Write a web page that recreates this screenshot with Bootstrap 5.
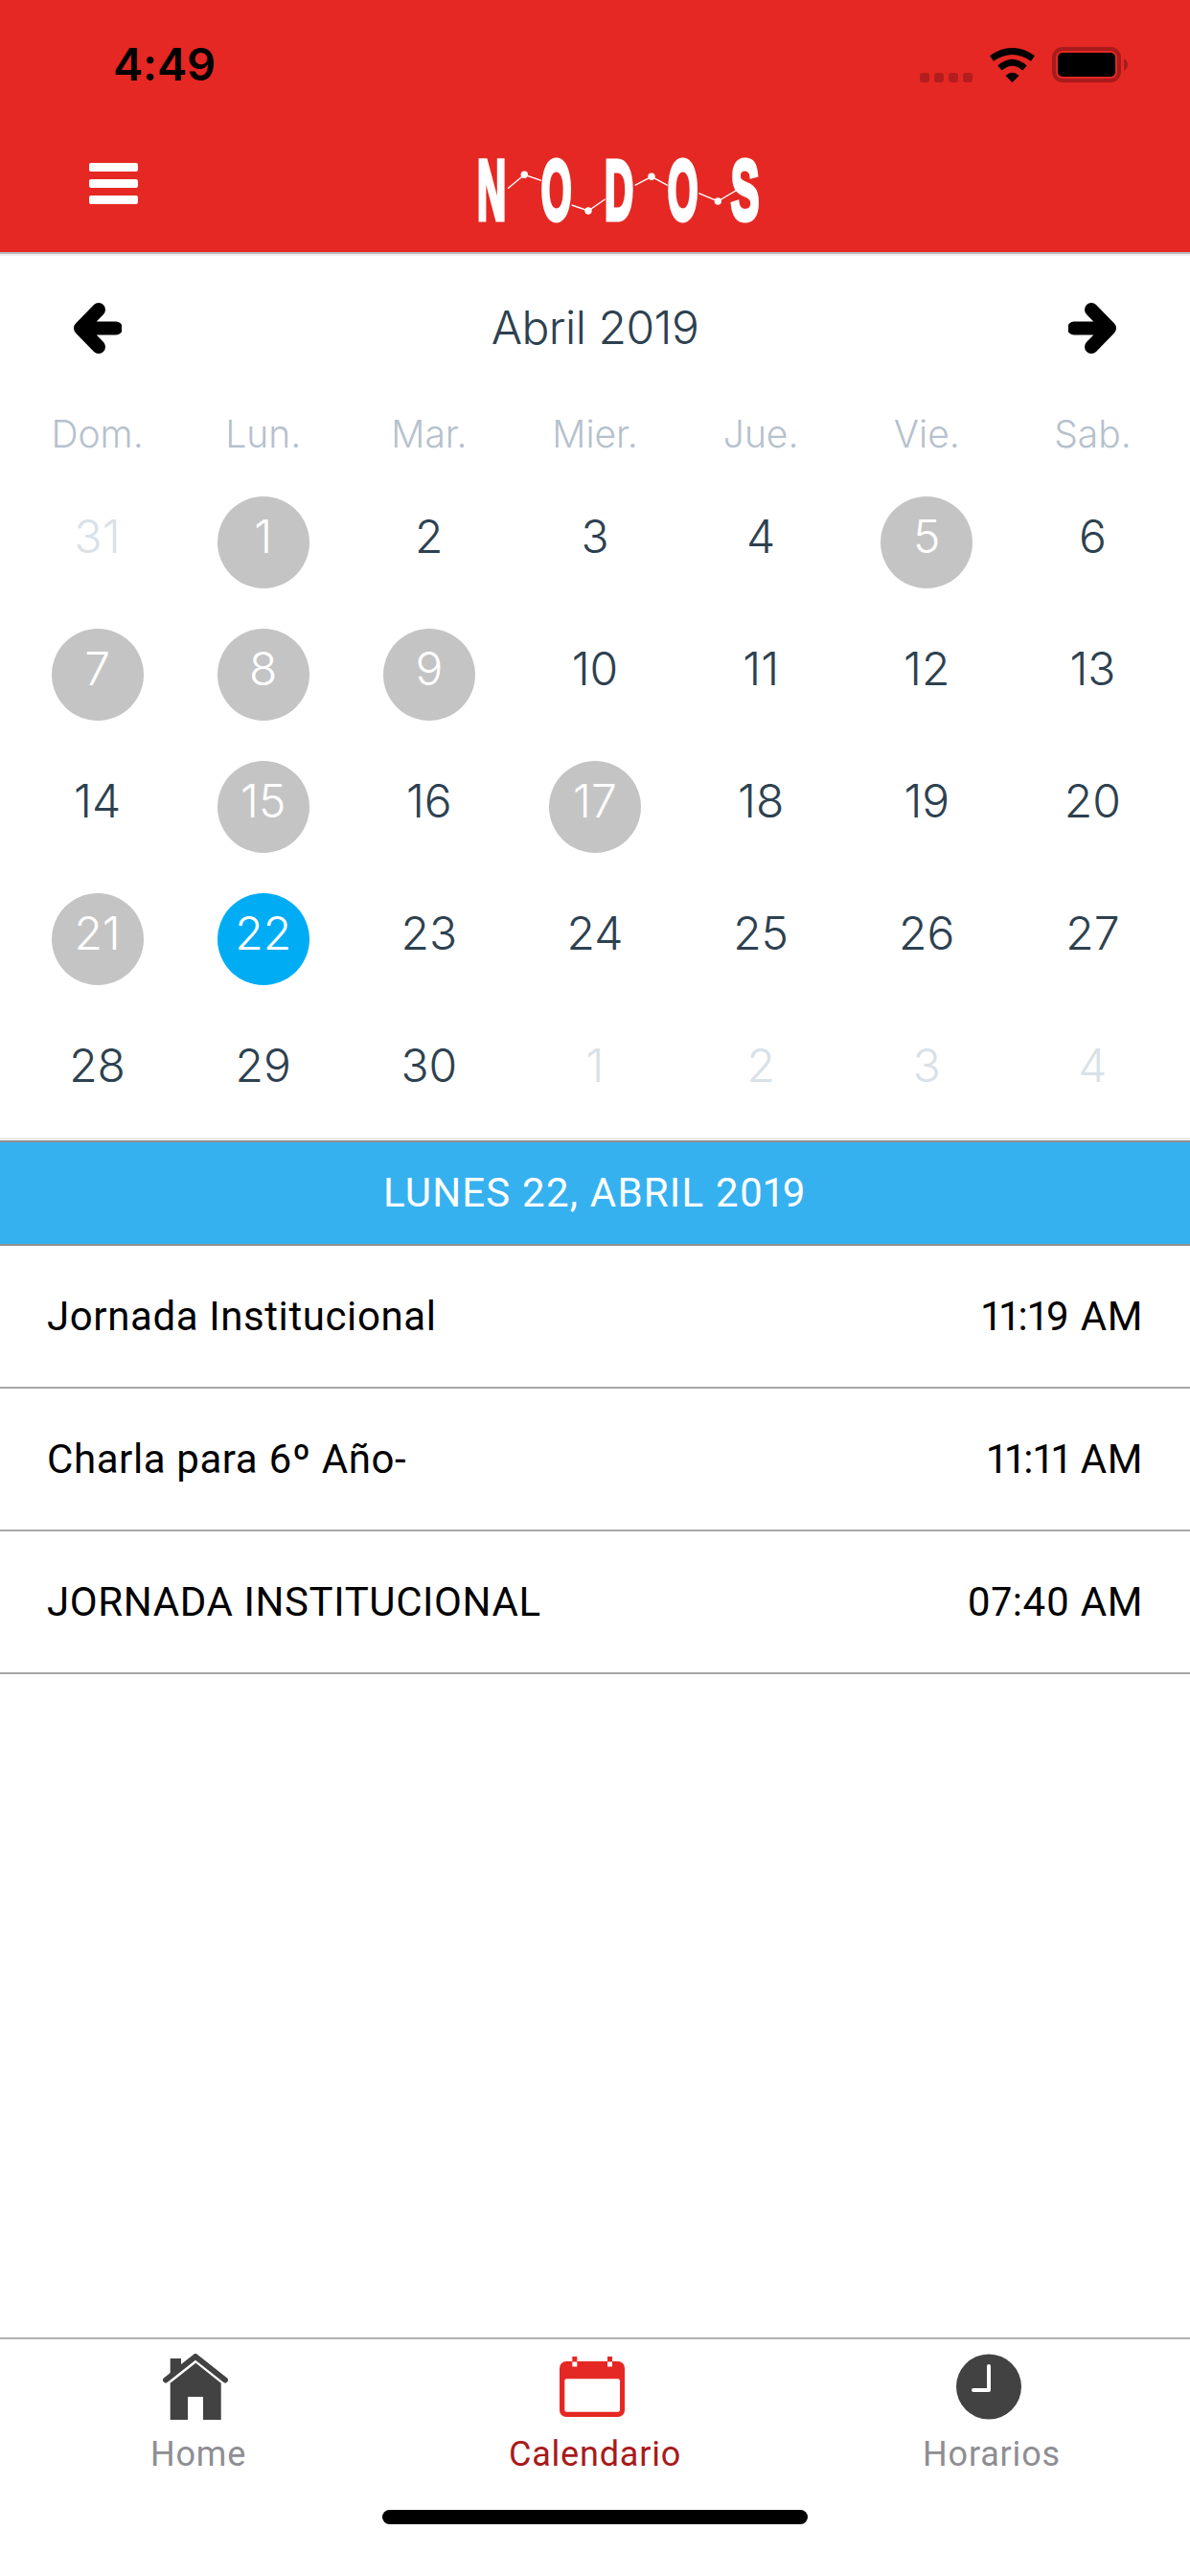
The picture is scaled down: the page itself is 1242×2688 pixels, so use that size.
<!DOCTYPE html>
<html lang="es">
<head>
<meta charset="utf-8">
<title>Nodos</title>
<link href="https://cdn.jsdelivr.net/npm/bootstrap@5.3.0/dist/css/bootstrap.min.css" rel="stylesheet">
<style>
html,body{height:100%;margin:0;background:#fff;font-family:Roboto,"Liberation Sans",sans-serif}
.app-shell{height:2688px;overflow:hidden}
.top-red{background:#e52823;height:263px}
.status-row{height:132px;padding:49px 65px 0 118px}
.clock-text{font:600 47px/36px Inter,"Liberation Sans",sans-serif;color:#000;letter-spacing:-.2px}
.sig-dots{gap:5px;margin-right:17px}
.sig-dots span{width:10px;height:10px;border-radius:3px;background:#b41d1d;display:block}
.wifi-ic{width:49px;height:36px;margin-right:17px;display:block}
.batt-ic{width:79px;height:37px;display:block}
.nav-red{height:131px;padding:0 0 0 93px}
.burger-btn{width:51px;gap:8px;padding-top:38px;height:100px;align-self:flex-start}
.burger-btn span{display:block;height:9px;border-radius:2px;background:#fff}
.logo-box{position:absolute;left:497px;top:32px;width:296px;height:69px;gap:34.5px}
.logo-slot{height:69px;font:700 89px/69px "Liberation Sans",sans-serif;color:#fff;-webkit-text-stroke:5px #fff}
.logo-slot span{display:inline-block;transform:scaleX(.47)}
.logo-slot .logo-round{transform:scaleX(.46)}
.logo-slot .logo-ess{transform:scaleX(.5)}
.logo-w1{width:33px}.logo-w2{width:32px}.logo-w3{width:31px}.logo-w4{width:32px}.logo-w5{width:30px}
.logo-lines{position:absolute;left:0;top:0;width:296px;height:69px;overflow:visible}
.nav-shadow{height:4px;background:#eeeef0;border-top:2px solid #b9b9bb}
.cal-wrap{padding:0 15px}
.month-row{height:150px;padding:0 62px;font:300 48px/150px Inter,sans-serif;color:#2d4150;letter-spacing:-.5px}
.arrow-ic{width:50px;height:53px;display:block}
.day-names{height:80px}
.day-name{width:calc(100%/7);text-align:center;font:300 39px/72px Inter,sans-serif;color:#b6c1cd}
.week-row{height:138px}
.day-cell{width:calc(100%/7)}
.day-num{width:96px;height:96px;border-radius:50%;font:300 48px/83px Inter,sans-serif;color:#2d4150;text-align:center}
.day-off{color:#d9e1e8}
.day-mark{background:#c4c4c4;color:#fff}
.day-sel{background:#00adf5;color:#fff}
.date-band{height:110px;margin-top:3px;background:#36b1f0;border-top:2px solid #8f8f8f;border-bottom:2px solid #8f8f8f;box-shadow:0 -3px 0 #ececec;color:#fff;font:400 42px/106px Roboto,sans-serif;text-align:center;letter-spacing:1.2px;font-variant-numeric:proportional-nums}
.event-row{height:149px;padding:0 49px 0 49px;border-bottom:2px solid #a8a8a8;font:400 42px/1 Roboto,sans-serif;color:#000;letter-spacing:.6px;font-variant-numeric:proportional-nums}
.tab-line{border-top:2px solid #b2b2b2;height:249px}
.tab-item{width:414px;padding-top:15px;font:400 36px/42px Roboto,"Liberation Sans",sans-serif;color:#8e8e93;letter-spacing:.8px}
.tab-icon{height:70px;margin:0 6px 14px 0}
.tab-on{color:#a81a1a}
.home-bar{width:444px;height:15px;border-radius:8px;background:#000}
.tab-bar-wrap{height:178px}
</style>
</head>
<body>
<div class="app-shell d-flex flex-column">
  <header class="top-red flex-shrink-0">
    <div class="status-row d-flex justify-content-between align-items-start">
      <div class="clock-text">4:49</div>
      <div class="d-flex align-items-end">
        <div class="sig-dots d-flex"><span></span><span></span><span></span><span></span></div>
        <svg class="wifi-ic" viewBox="0 0 49 36" aria-hidden="true"><path d="M3 11Q24.500 -4 46 11" fill="none" stroke="#000" stroke-width="7"/><path d="M11.500 21Q24.500 9.500 37.500 21" fill="none" stroke="#000" stroke-width="6.500"/><path d="M17.500 29Q24.500 22.500 31.500 29L24.500 36Z"/></svg>
        <svg class="batt-ic" viewBox="0 0 79 37" aria-hidden="true"><rect x="2" y="2" width="68" height="33" rx="9" fill="none" stroke="#a81b1b" stroke-width="4"/><rect x="6" y="6" width="60" height="25" rx="5"/><path d="M75 12Q79 15 79 18.500T75 25Z" fill="#a81b1b"/></svg>
      </div>
    </div>
    <nav class="nav-red navbar p-0 d-flex position-relative align-items-start">
      <div class="nav-red d-flex w-100">
        <div class="burger-btn d-flex flex-column"><span></span><span></span><span></span></div>
      </div>
      <div class="logo-box d-flex">
        <div class="logo-slot logo-w1 d-flex justify-content-center"><span>N</span></div>
        <div class="logo-slot logo-w2 d-flex justify-content-center"><span class="logo-round">O</span></div>
        <div class="logo-slot logo-w3 d-flex justify-content-center"><span>D</span></div>
        <div class="logo-slot logo-w4 d-flex justify-content-center"><span class="logo-round">O</span></div>
        <div class="logo-slot logo-w5 d-flex justify-content-center"><span class="logo-ess">S</span></div>
        <svg class="logo-lines" viewBox="0 0 296 69" aria-hidden="true">
          <g fill="none" stroke="#fff" stroke-width="1.400"><path d="M33 32.700L50.300 18.300 68 24.300"/><path d="M99.700 50L117 56 134.700 43.700"/><path d="M165.700 29.300L183 20.300 199.700 29.300"/><path d="M232.300 37.700L252.300 46 273.700 33.300"/></g>
          <g fill="#fff"><circle cx="50.300" cy="18.300" r="3.700"/><circle cx="117" cy="56" r="3.700"/><circle cx="183" cy="20.300" r="3.700"/><circle cx="252.300" cy="46" r="3.700"/></g>
        </svg>
      </div>
    </nav>
  </header>
  <div class="nav-shadow flex-shrink-0"></div>

  <section class="cal-wrap flex-shrink-0">
    <div class="month-row d-flex justify-content-between align-items-center">
      <svg class="arrow-ic" viewBox="0 0 50 53" aria-hidden="true"><path d="M26 7L7 26.500 26 46M7 26.500H44" fill="none" stroke="#000" stroke-width="14" stroke-linecap="round" stroke-linejoin="round"/></svg>
      <span>Abril 2019</span>
      <svg class="arrow-ic" viewBox="0 0 50 53" aria-hidden="true"><path d="M24 7L43 26.500 24 46M43 26.500H6" fill="none" stroke="#000" stroke-width="14" stroke-linecap="round" stroke-linejoin="round"/></svg>
    </div>
    <div class="day-names d-flex">
      <div class="day-name">Dom.</div><div class="day-name">Lun.</div><div class="day-name">Mar.</div><div class="day-name">Mier.</div><div class="day-name">Jue.</div><div class="day-name">Vie.</div><div class="day-name">Sab.</div>
    </div>
    <div class="week-row d-flex">
      <div class="day-cell d-flex justify-content-center align-items-center"><div class="day-num day-off">31</div></div>
      <div class="day-cell d-flex justify-content-center align-items-center"><div class="day-num day-mark">1</div></div>
      <div class="day-cell d-flex justify-content-center align-items-center"><div class="day-num">2</div></div>
      <div class="day-cell d-flex justify-content-center align-items-center"><div class="day-num">3</div></div>
      <div class="day-cell d-flex justify-content-center align-items-center"><div class="day-num">4</div></div>
      <div class="day-cell d-flex justify-content-center align-items-center"><div class="day-num day-mark">5</div></div>
      <div class="day-cell d-flex justify-content-center align-items-center"><div class="day-num">6</div></div>
    </div>
    <div class="week-row d-flex">
      <div class="day-cell d-flex justify-content-center align-items-center"><div class="day-num day-mark">7</div></div>
      <div class="day-cell d-flex justify-content-center align-items-center"><div class="day-num day-mark">8</div></div>
      <div class="day-cell d-flex justify-content-center align-items-center"><div class="day-num day-mark">9</div></div>
      <div class="day-cell d-flex justify-content-center align-items-center"><div class="day-num">10</div></div>
      <div class="day-cell d-flex justify-content-center align-items-center"><div class="day-num">11</div></div>
      <div class="day-cell d-flex justify-content-center align-items-center"><div class="day-num">12</div></div>
      <div class="day-cell d-flex justify-content-center align-items-center"><div class="day-num">13</div></div>
    </div>
    <div class="week-row d-flex">
      <div class="day-cell d-flex justify-content-center align-items-center"><div class="day-num">14</div></div>
      <div class="day-cell d-flex justify-content-center align-items-center"><div class="day-num day-mark">15</div></div>
      <div class="day-cell d-flex justify-content-center align-items-center"><div class="day-num">16</div></div>
      <div class="day-cell d-flex justify-content-center align-items-center"><div class="day-num day-mark">17</div></div>
      <div class="day-cell d-flex justify-content-center align-items-center"><div class="day-num">18</div></div>
      <div class="day-cell d-flex justify-content-center align-items-center"><div class="day-num">19</div></div>
      <div class="day-cell d-flex justify-content-center align-items-center"><div class="day-num">20</div></div>
    </div>
    <div class="week-row d-flex">
      <div class="day-cell d-flex justify-content-center align-items-center"><div class="day-num day-mark">21</div></div>
      <div class="day-cell d-flex justify-content-center align-items-center"><div class="day-num day-sel">22</div></div>
      <div class="day-cell d-flex justify-content-center align-items-center"><div class="day-num">23</div></div>
      <div class="day-cell d-flex justify-content-center align-items-center"><div class="day-num">24</div></div>
      <div class="day-cell d-flex justify-content-center align-items-center"><div class="day-num">25</div></div>
      <div class="day-cell d-flex justify-content-center align-items-center"><div class="day-num">26</div></div>
      <div class="day-cell d-flex justify-content-center align-items-center"><div class="day-num">27</div></div>
    </div>
    <div class="week-row d-flex">
      <div class="day-cell d-flex justify-content-center align-items-center"><div class="day-num">28</div></div>
      <div class="day-cell d-flex justify-content-center align-items-center"><div class="day-num">29</div></div>
      <div class="day-cell d-flex justify-content-center align-items-center"><div class="day-num">30</div></div>
      <div class="day-cell d-flex justify-content-center align-items-center"><div class="day-num day-off">1</div></div>
      <div class="day-cell d-flex justify-content-center align-items-center"><div class="day-num day-off">2</div></div>
      <div class="day-cell d-flex justify-content-center align-items-center"><div class="day-num day-off">3</div></div>
      <div class="day-cell d-flex justify-content-center align-items-center"><div class="day-num day-off">4</div></div>
    </div>
  </section>

  <div class="date-band flex-shrink-0">LUNES 22, ABRIL 2019</div>

  <div class="flex-grow-1">
    <div class="event-row d-flex justify-content-between align-items-center"><span>Jornada Institucional</span><span>11:19 AM</span></div>
    <div class="event-row d-flex justify-content-between align-items-center"><span>Charla para 6º Año-</span><span>11:11 AM</span></div>
    <div class="event-row d-flex justify-content-between align-items-center"><span>JORNADA INSTITUCIONAL</span><span>07:40 AM</span></div>
  </div>

  <footer class="tab-line flex-shrink-0">
    <div class="tab-bar-wrap d-flex">
      <div class="tab-item d-flex flex-column align-items-center">
        <svg class="tab-icon" width="68" height="70" viewBox="0 0 68 70" aria-hidden="true"><path fill="#424242" d="M7.700 5H19V12L7.700 21ZM34.300 9.700L60.700 30.700V69H42V45H26V69H7.700V30.700Z"/><path d="M3 27.500L34 3 65 27.500" fill="none" stroke="#424242" stroke-width="6" stroke-linecap="round" stroke-linejoin="round"/></svg>
        <span>Home</span>
      </div>
      <div class="tab-item tab-on d-flex flex-column align-items-center">
        <svg class="tab-icon" width="68" height="70" viewBox="0 -3 68 70" aria-hidden="true"><rect y="5" width="68" height="58" rx="7" fill="#e52823"/><rect x="5.300" y="23.300" width="57.700" height="34.400" rx="2" fill="#fff"/><rect x="13.300" width="5" height="6" fill="#e52823"/><rect x="50" width="5" height="6" fill="#e52823"/><rect x="13.300" y="5.500" width="5" height="5" fill="#fff"/><rect x="50" y="5.500" width="5" height="5" fill="#fff"/></svg>
        <span>Calendario</span>
      </div>
      <div class="tab-item d-flex flex-column align-items-center">
        <svg class="tab-icon" width="68" height="70" viewBox="0 0 68 70" aria-hidden="true"><circle cx="34" cy="34.500" r="34" fill="#424242"/><path d="M34 13V38H18" fill="none" stroke="#fff" stroke-width="4" stroke-linecap="round" stroke-linejoin="round"/></svg>
        <span>Horarios</span>
      </div>
    </div>
    <div class="d-flex justify-content-center"><div class="home-bar"></div></div>
  </footer>
</div>
</body>
</html>
